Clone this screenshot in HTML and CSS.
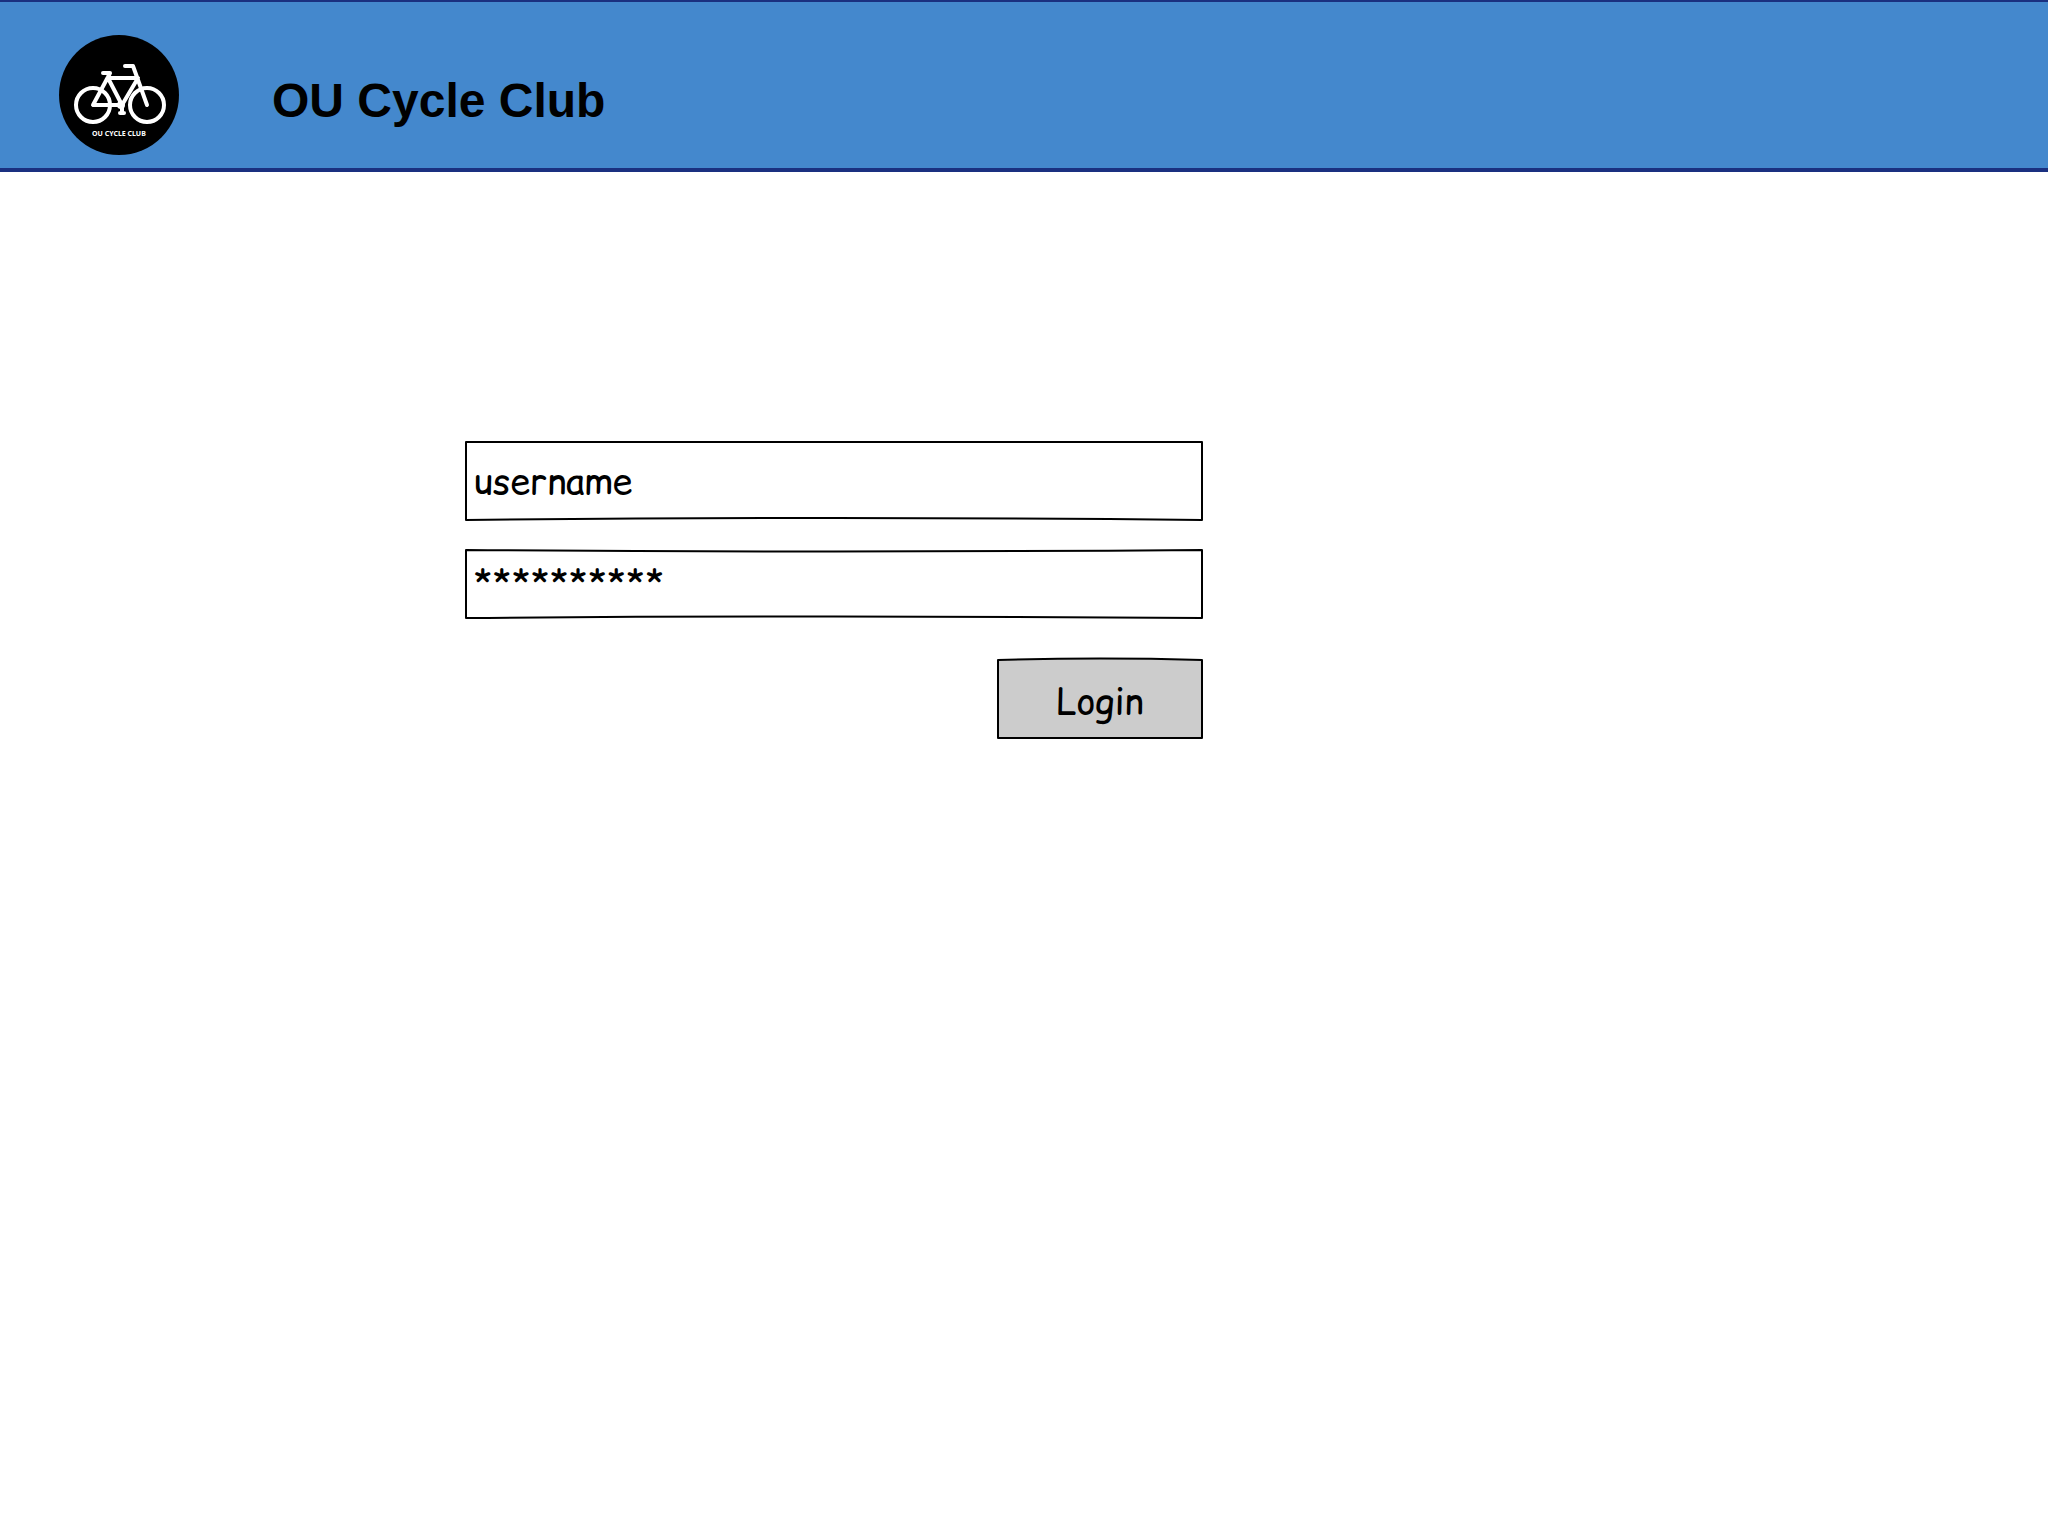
FILE: index.html
```html
<!DOCTYPE html>
<html lang="en">
<head>
<meta charset="utf-8">
<meta name="viewport" content="width=device-width, initial-scale=1">
<title>OU Cycle Club</title>
<link rel="stylesheet" href="styles.css">
</head>
<body>
<header class="site-header">
  <svg class="logo" viewBox="0 0 120 120" role="img" aria-label="OU Cycle Club logo">
    <circle cx="60" cy="60" r="60"/>
    <g class="bike">
      <circle cx="34" cy="70" r="17"/>
      <circle cx="88" cy="70" r="17"/>
      <path d="M44 38H51L49 42L34 70H63L79 43M49 43H78M49 43L63 70M66 31H74L88 70"/>
      <path d="M63 70V78M61 78H65"/>
    </g>
    <circle class="crank" cx="62" cy="70" r="4"/>
    <text class="logo-text" x="33" y="101">OU CYCLE CLUB</text>
  </svg>
  <h1 class="site-title">OU Cycle Club</h1>
</header>
<main class="page">
  <form class="login">
    <div class="sketch">
      <svg class="outline" viewBox="0 0 100 80" preserveAspectRatio="none" aria-hidden="true"><path d="M0 0H100V80Q50 76 0 80Z"/></svg>
      <input class="field" type="text" value="username" aria-label="Username">
    </div>
    <div class="sketch">
      <svg class="outline" viewBox="0 0 100 70" preserveAspectRatio="none" aria-hidden="true"><path d="M0 0Q50 3 100 0V70Q50 67 0 70Z"/></svg>
      <input class="field field-password" type="text" value="**********" aria-label="Password" autocomplete="off">
    </div>
    <div class="sketch sketch-button">
      <svg class="outline" viewBox="0 0 100 80" preserveAspectRatio="none" aria-hidden="true"><path d="M0 0Q50 -3 100 0V80H0Z"/></svg>
      <button class="button" type="button">Login</button>
    </div>
  </form>
</main>
</body>
</html>
```
FILE: styles.css
```css
* { box-sizing: border-box; }
body { margin: 0; background: #fff; color: #000; }

.site-header {
  display: flex;
  align-items: center;
  gap: 93px;
  padding: 33px 59px 13px;
  background: #4488cd;
  border-top: 2px solid #1a3080;
  border-bottom: 4px solid #1a3080;
}
.logo { flex: none; width: 120px; height: 120px; }
.bike {
  fill: none;
  stroke: #fff;
  stroke-width: 4;
  stroke-linecap: round;
  stroke-linejoin: round;
}
.crank { fill: #fff; }
.logo-text { fill: #fff; font: bold 7px "Noto Sans", sans-serif; }
.site-title {
  margin: 0;
  padding-top: 12px;
  font: bold 48px/56px "Liberation Sans", Arial, sans-serif;
}

.page {
  display: grid;
  grid-template-columns: 466fr 736fr 846fr;
  padding-top: 270px;
}
.login { grid-column: 2; display: grid; }

/* Hand-drawn outline stacked behind its control */
.sketch { position: relative; display: grid; margin-bottom: 30px; }
.outline {
  position: absolute;
  inset: 0;
  width: 100%;
  height: 100%;
  overflow: visible;
  fill: #fff;
  stroke: #000;
  stroke-width: 2px;
  stroke-linejoin: round;
}
.outline path { vector-effect: non-scaling-stroke; }
.field, .button {
  position: relative;
  width: 100%;
  border: 0;
  background: transparent;
  color: #000;
  font: 36px/48px "Comic Sans MS", "Comic Relief", cursive;
}
.field { height: 78px; padding: 0 8px; }
.field-password { height: 68px; }
.sketch-button { justify-self: end; width: 204px; margin-top: 12px; }
.sketch-button .outline { fill: #ccc; }
.button { height: 78px; padding: 4px 0 0; }
```
